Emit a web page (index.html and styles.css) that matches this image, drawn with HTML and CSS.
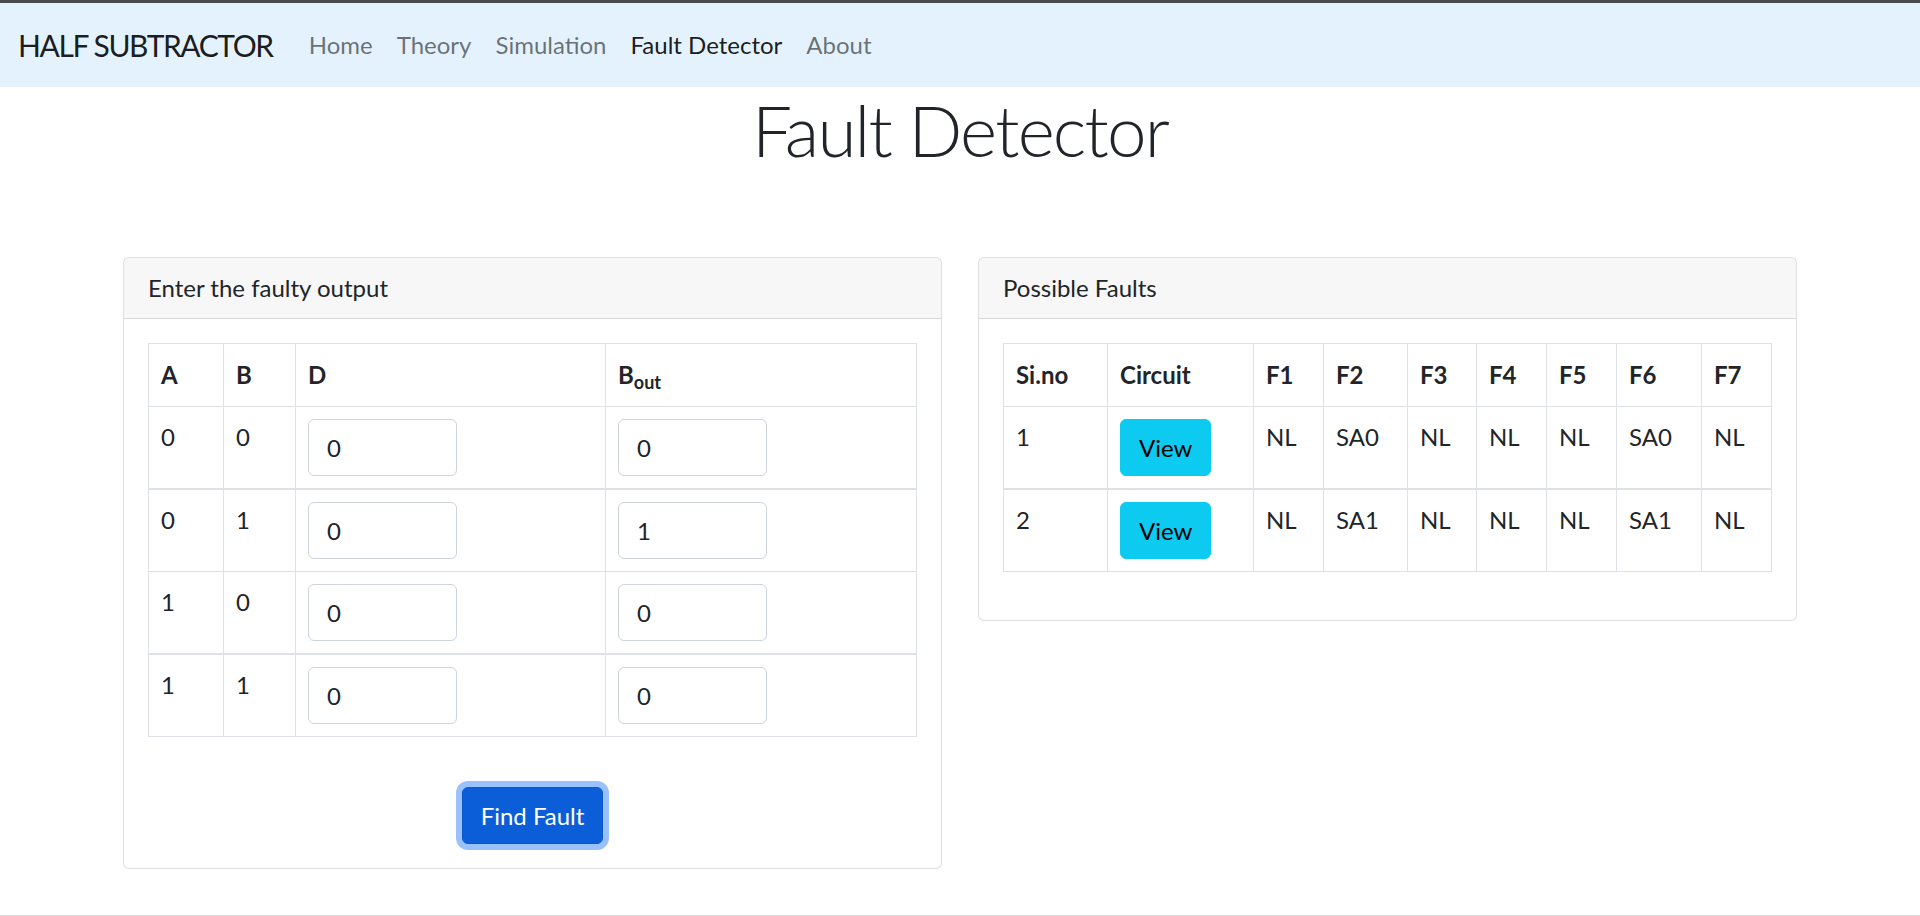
FILE: index.html
```html
<!DOCTYPE html>
<html lang="en">
<head>
<meta charset="utf-8">
<title>Half Subtractor - Fault Detector</title>
<link rel="stylesheet" href="styles.css">
</head>
<body>
<div class="page">
  <div class="topline"></div>
  <nav class="navbar">
    <a class="brand" href="#">HALF SUBTRACTOR</a>
    <ul class="nav">
      <li><a class="nav-link" href="#">Home</a></li>
      <li><a class="nav-link" href="#">Theory</a></li>
      <li><a class="nav-link" href="#">Simulation</a></li>
      <li><a class="nav-link active" href="#">Fault Detector</a></li>
      <li><a class="nav-link" href="#">About</a></li>
    </ul>
  </nav>

  <h1 class="title">Fault Detector</h1>

  <div class="container">
    <div class="row">
      <div class="card">
        <div class="card-header">Enter the faulty output</div>
        <div class="card-body">
          <table class="table">
            <colgroup>
              <col class="w-a"><col class="w-b"><col class="w-d"><col class="w-bout">
            </colgroup>
            <thead>
              <tr><th>A</th><th>B</th><th>D</th><th>B<sub>out</sub></th></tr>
            </thead>
            <tbody>
              <tr><td>0</td><td>0</td><td><input class="form-control" type="text" value="0"></td><td><input class="form-control" type="text" value="0"></td></tr>
              <tr class="sep"><td>0</td><td>1</td><td><input class="form-control" type="text" value="0"></td><td><input class="form-control" type="text" value="1"></td></tr>
              <tr><td>1</td><td>0</td><td><input class="form-control" type="text" value="0"></td><td><input class="form-control" type="text" value="0"></td></tr>
              <tr class="sep"><td>1</td><td>1</td><td><input class="form-control" type="text" value="0"></td><td><input class="form-control" type="text" value="0"></td></tr>
            </tbody>
          </table>
          <div class="actions">
            <button class="btn btn-primary" type="button">Find Fault</button>
          </div>
        </div>
      </div>

      <div class="card">
        <div class="card-header">Possible Faults</div>
        <div class="card-body">
          <table class="table">
            <colgroup>
              <col class="w-sino"><col class="w-circuit"><col class="w-f1"><col class="w-f2"><col class="w-f3"><col class="w-f4"><col class="w-f5"><col class="w-f6"><col class="w-f7">
            </colgroup>
            <thead>
              <tr><th>Si.no</th><th>Circuit</th><th>F1</th><th>F2</th><th>F3</th><th>F4</th><th>F5</th><th>F6</th><th>F7</th></tr>
            </thead>
            <tbody>
              <tr><td>1</td><td><button class="btn btn-info" type="button">View</button></td><td>NL</td><td>SA0</td><td>NL</td><td>NL</td><td>NL</td><td>SA0</td><td>NL</td></tr>
              <tr class="sep"><td>2</td><td><button class="btn btn-info" type="button">View</button></td><td>NL</td><td>SA1</td><td>NL</td><td>NL</td><td>NL</td><td>SA1</td><td>NL</td></tr>
            </tbody>
          </table>
        </div>
      </div>
    </div>
  </div>
</div>
<div class="bottomline"></div>
</body>
</html>
```

FILE: styles.css
```css
* {
  box-sizing: border-box;
}

html, body {
  margin: 0;
  padding: 0;
}

body {
  font-family: Lato, "Open Sans", "Liberation Sans", sans-serif;
  font-size: 24px;
  line-height: 1.5;
  color: #212529;
  background: #fff;
}

.page {
  min-height: 915px;
}

.topline {
  height: 3px;
  background: #4a4a4f;
}

.bottomline {
  height: 1px;
  background: #d9d9d9;
}

/* Navbar */
.navbar {
  display: flex;
  align-items: center;
  padding: 12px 18px;
  background: #e3f2fd;
}

.brand {
  display: inline-block;
  padding: 7.5px 0;
  margin-right: 24px;
  font-size: 30px;
  line-height: 45px;
  letter-spacing: -1.4px;
  color: rgba(0, 0, 0, 0.9);
  text-decoration: none;
  white-space: nowrap;
}

.nav {
  display: flex;
  list-style: none;
  margin: 0;
  padding: 0;
}

.nav-link {
  display: block;
  padding: 12px;
  line-height: 36px;
  color: rgba(0, 0, 0, 0.55);
  text-decoration: none;
}

.nav-link.active {
  color: rgba(0, 0, 0, 0.9);
}

/* Title */
.title {
  margin: 0;
  height: 86px;
  text-align: center;
  font-size: 71px;
  font-weight: 300;
  line-height: 86px;
  letter-spacing: -1.8px;
}

/* Layout */
.container {
  max-width: 1710px;
  margin: 84px auto 0;
  padding: 0 18px;
}

.row {
  display: grid;
  grid-template-columns: 1fr 1fr;
  column-gap: 36px;
  align-items: start;
}

/* Card */
.card {
  background: #fff;
  border: 1px solid rgba(0, 0, 0, 0.125);
  border-radius: 6px;
  overflow: hidden;
}

.card-header {
  padding: 12px 24px;
  background: rgba(0, 0, 0, 0.03);
  border-bottom: 1px solid rgba(0, 0, 0, 0.125);
  line-height: 36px;
}

.card-body {
  padding: 24px;
}

/* Table */
.table {
  width: 100%;
  table-layout: fixed;
  border-collapse: collapse;
  margin-bottom: 24px;
  border: 1px solid #dee2e6;
}

.table th,
.table td {
  padding: 12px;
  text-align: left;
  vertical-align: top;
  border: 1px solid #dee2e6;
  line-height: 36px;
}

.table th {
  padding-top: 13px;
  padding-bottom: 13px;
  font-weight: 700;
}

.table tr.sep td {
  border-top: 2px solid #dee2e6;
}

.table sub {
  position: relative;
  bottom: -0.25em;
  font-size: 0.75em;
  line-height: 0;
  vertical-align: baseline;
}

.w-a { width: 75px; }
.w-b { width: 72px; }
.w-d { width: 310px; }
.w-bout { width: 311px; }

.w-sino { width: 104px; }
.w-circuit { width: 146px; }
.w-f1 { width: 70px; }
.w-f2 { width: 84px; }
.w-f3 { width: 69px; }
.w-f4 { width: 70px; }
.w-f5 { width: 70px; }
.w-f6 { width: 85px; }
.w-f7 { width: 70px; }

/* Inputs */
.form-control {
  display: block;
  width: 149px;
  height: 57px;
  padding: 9px 18px;
  font-family: inherit;
  font-size: 24px;
  line-height: 36px;
  color: #212529;
  background: #fff;
  border: 1px solid #ced4da;
  border-radius: 6px;
}

/* Buttons */
.btn {
  display: inline-block;
  height: 57px;
  padding: 9px 18px;
  font-family: inherit;
  font-size: 24px;
  line-height: 36px;
  border: 1px solid transparent;
  border-radius: 6px;
  cursor: pointer;
}

.btn-info {
  color: #000;
  background: #0dcaf0;
  border-color: #0dcaf0;
}

.btn-primary {
  color: #fff;
  background: #0b5ed7;
  border-color: #0a58ca;
  box-shadow: 0 0 0 6px rgba(49, 132, 253, 0.5);
}

.actions {
  text-align: center;
  padding-top: 26px;
}
```
